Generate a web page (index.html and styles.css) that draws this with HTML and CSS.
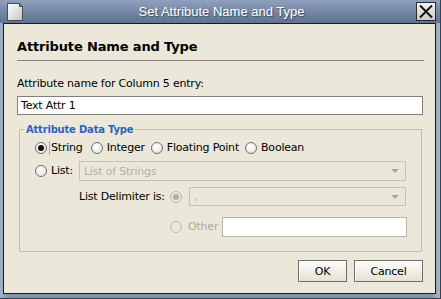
FILE: index.html
```html
<!DOCTYPE html>
<html lang="en">
<head>
  <meta charset="UTF-8">
  <title>Set Attribute Name and Type</title>
  <link rel="stylesheet" href="styles.css">
</head>
<body>

  <div class="window">
    <div class="titlebar">
      <svg class="doc-icon" width="16" height="18" viewBox="0 0 16 18">
        <defs>
          <linearGradient id="page" x1="0" y1="0" x2="1" y2="1">
            <stop offset="0" stop-color="#ffffff"/>
            <stop offset="1" stop-color="#c4c4c4"/>
          </linearGradient>
        </defs>
        <path d="M0.5 0.5 H12.5 L15.5 3.5 V17.5 H0.5 Z" fill="url(#page)" stroke="#4c4c4c"/>
        <path d="M12.5 0.5 V3.5 H15.5 Z" fill="#8a8a8a" stroke="#4c4c4c"/>
      </svg>
      <span class="title">Set Attribute Name and Type</span>
      <svg class="close" width="20" height="19" viewBox="0 0 20 19">
        <defs>
          <linearGradient id="btn" x1="0" y1="0" x2="0" y2="1">
            <stop offset="0" stop-color="#f4f4f2"/>
            <stop offset="1" stop-color="#c9c9c6"/>
          </linearGradient>
        </defs>
        <rect x="0.5" y="0.5" width="19" height="18" fill="url(#btn)" stroke="#2c2c2c"/>
        <path d="M4 3.5 L16 15.5 M16 3.5 L4 15.5" stroke="#111" stroke-width="2"/>
      </svg>
    </div>

    <div class="dialog">
      <h1 class="heading">Attribute Name and Type</h1>
      <div class="sep"></div>

      <div class="field-label">Attribute name for Column 5 entry:</div>
      <div class="textfield">Text Attr 1</div>

      <fieldset class="group">
        <legend>Attribute Data Type</legend>

        <div class="row types">
          <span class="radio checked"></span>
          <span class="opt focused">String</span>
          <span class="radio"></span>
          <span class="opt">Integer</span>
          <span class="radio"></span>
          <span class="opt">Floating Point</span>
          <span class="radio"></span>
          <span class="opt">Boolean</span>
        </div>

        <div class="row list">
          <span class="radio"></span>
          <span class="opt">List:</span>
          <div class="combo">
            <span>List of Strings</span>
            <span class="arrow"></span>
          </div>
        </div>

        <div class="row delim">
          <span class="delim-label">List Delimiter is:</span>
          <span class="radio checked disabled"></span>
          <div class="combo short">
            <span>,</span>
            <span class="arrow"></span>
          </div>
        </div>

        <div class="row other">
          <span class="radio disabled"></span>
          <span class="opt dim">Other</span>
          <div class="textfield small"></div>
        </div>
      </fieldset>

      <div class="buttons">
        <button class="btn ok">OK</button>
        <button class="btn cancel">Cancel</button>
      </div>
    </div>
  </div>

</body>
</html>
```

FILE: styles.css
```css
body {
  margin: 0;
  font-family: "DejaVu Sans", sans-serif;
  font-size: 11px;
  color: #000;
}
.window {
  width: 441px;
  height: 299px;
  box-sizing: border-box;
  display: flex;
  flex-direction: column;
  background: linear-gradient(to right, #a3b3ca, #8293ad 2%, #8293ad 98%, #a8b6ca);
  border-right: 1px solid #3a4150;
  border-bottom: 1px solid #3a4150;
}
.titlebar {
  height: 23px;
  display: grid;
  grid-template-columns: 1fr auto 1fr;
  align-items: center;
  padding: 0 4px 0 7px;
  background: linear-gradient(#8fa1bc, #7488a6 50%, #5f7290);
}
.doc-icon {
  justify-self: start;
}
.close {
  justify-self: end;
}
.title {
  font-family: "Liberation Sans", sans-serif;
  font-size: 13px;
  color: #fff;
  text-shadow: 1px 1px 1px rgba(30, 40, 60, 0.6);
}
.dialog {
  flex: 1;
  display: flex;
  flex-direction: column;
  margin: 0 4px 4px 3px;
  border: 1px solid #1b1b1b;
  background: #ebe8d9;
  padding: 15px 12px 0 13px;
  letter-spacing: -0.2px;
}
.heading {
  margin: 0;
  font-size: 13px;
  line-height: 16px;
  letter-spacing: -0.15px;
}
.sep {
  height: 1px;
  margin: 5px -1px 0 0;
  background: #85847e;
}
.field-label {
  margin-top: 16px;
  line-height: 13px;
}
.textfield {
  margin-top: 6px;
  height: 19px;
  box-sizing: border-box;
  border: 1px solid #7e7e7e;
  background: #fff;
  padding-left: 3px;
  line-height: 17px;
}
.group {
  margin: 8px 1px 0 2px;
  border: 1px solid #c3c0b0;
  padding: 0 0 14px 4px;
  min-width: 0;
}
.group legend {
  padding: 0 2px;
  font-size: 10px;
  font-weight: bold;
  line-height: 13px;
  color: #2f61bd;
  letter-spacing: -0.2px;
}
.row {
  display: flex;
  align-items: center;
  padding-left: 11px;
  padding-right: 15px;
}
.types {
  margin-top: 4px;
  height: 16px;
}
.list {
  margin-top: 5px;
  height: 20px;
}
.delim {
  margin-top: 6px;
  height: 19px;
  padding-left: 55px;
}
.other {
  margin-top: 11px;
  height: 20px;
  padding-left: 146px;
  padding-right: 14px;
}
.radio {
  width: 12px;
  height: 12px;
  box-sizing: border-box;
  border: 1px solid #6f6f6f;
  border-radius: 50%;
  background: radial-gradient(circle at 40% 35%, #ffffff, #e2dfd2);
  display: flex;
  align-items: center;
  justify-content: center;
  margin-right: 4px;
  flex: none;
}
.radio.checked::after {
  content: "";
  width: 6px;
  height: 6px;
  border-radius: 50%;
  background: #111;
}
.radio.disabled {
  border-color: #bab7a9;
  background: #ebe8d9;
}
.radio.checked.disabled::after {
  background: #b2afa2;
}
.opt {
  margin-right: 6px;
  line-height: 14px;
}
.opt.focused {
  margin-left: -2px;
  padding-left: 1px;
  border-left: 1px solid #f0a030;
  margin-right: 8px;
}
.opt.dim {
  color: #aeab9d;
  margin-left: 2px;
  margin-right: 4px;
}
.combo {
  flex: 1;
  height: 20px;
  box-sizing: border-box;
  border: 1px solid #c6c3b4;
  padding: 0 6px 0 4px;
  display: flex;
  align-items: center;
  justify-content: space-between;
  color: #b3b0a2;
}
.combo.short {
  height: 19px;
  margin-left: 3px;
}
.arrow {
  width: 0;
  height: 0;
  border-left: 4px solid transparent;
  border-right: 4px solid transparent;
  border-top: 4px solid #a9a79b;
}
.delim-label {
  width: 87px;
  margin-right: 4px;
}
.textfield.small {
  flex: 1;
  margin: 0;
  height: 20px;
  border-color: #b9b6a8;
}
.buttons {
  display: flex;
  justify-content: flex-end;
  gap: 7px;
  margin-top: 8px;
}
.btn {
  height: 22px;
  box-sizing: border-box;
  border: 1px solid #6e6e6a;
  background: linear-gradient(#fdfdfb, #e5e2d4);
  box-shadow: inset 1px 1px 0 #fff;
  font-family: "DejaVu Sans", sans-serif;
  font-size: 11px;
  letter-spacing: -0.2px;
  color: #000;
  padding: 0;
}
.ok {
  width: 49px;
}
.cancel {
  width: 69px;
}
```
